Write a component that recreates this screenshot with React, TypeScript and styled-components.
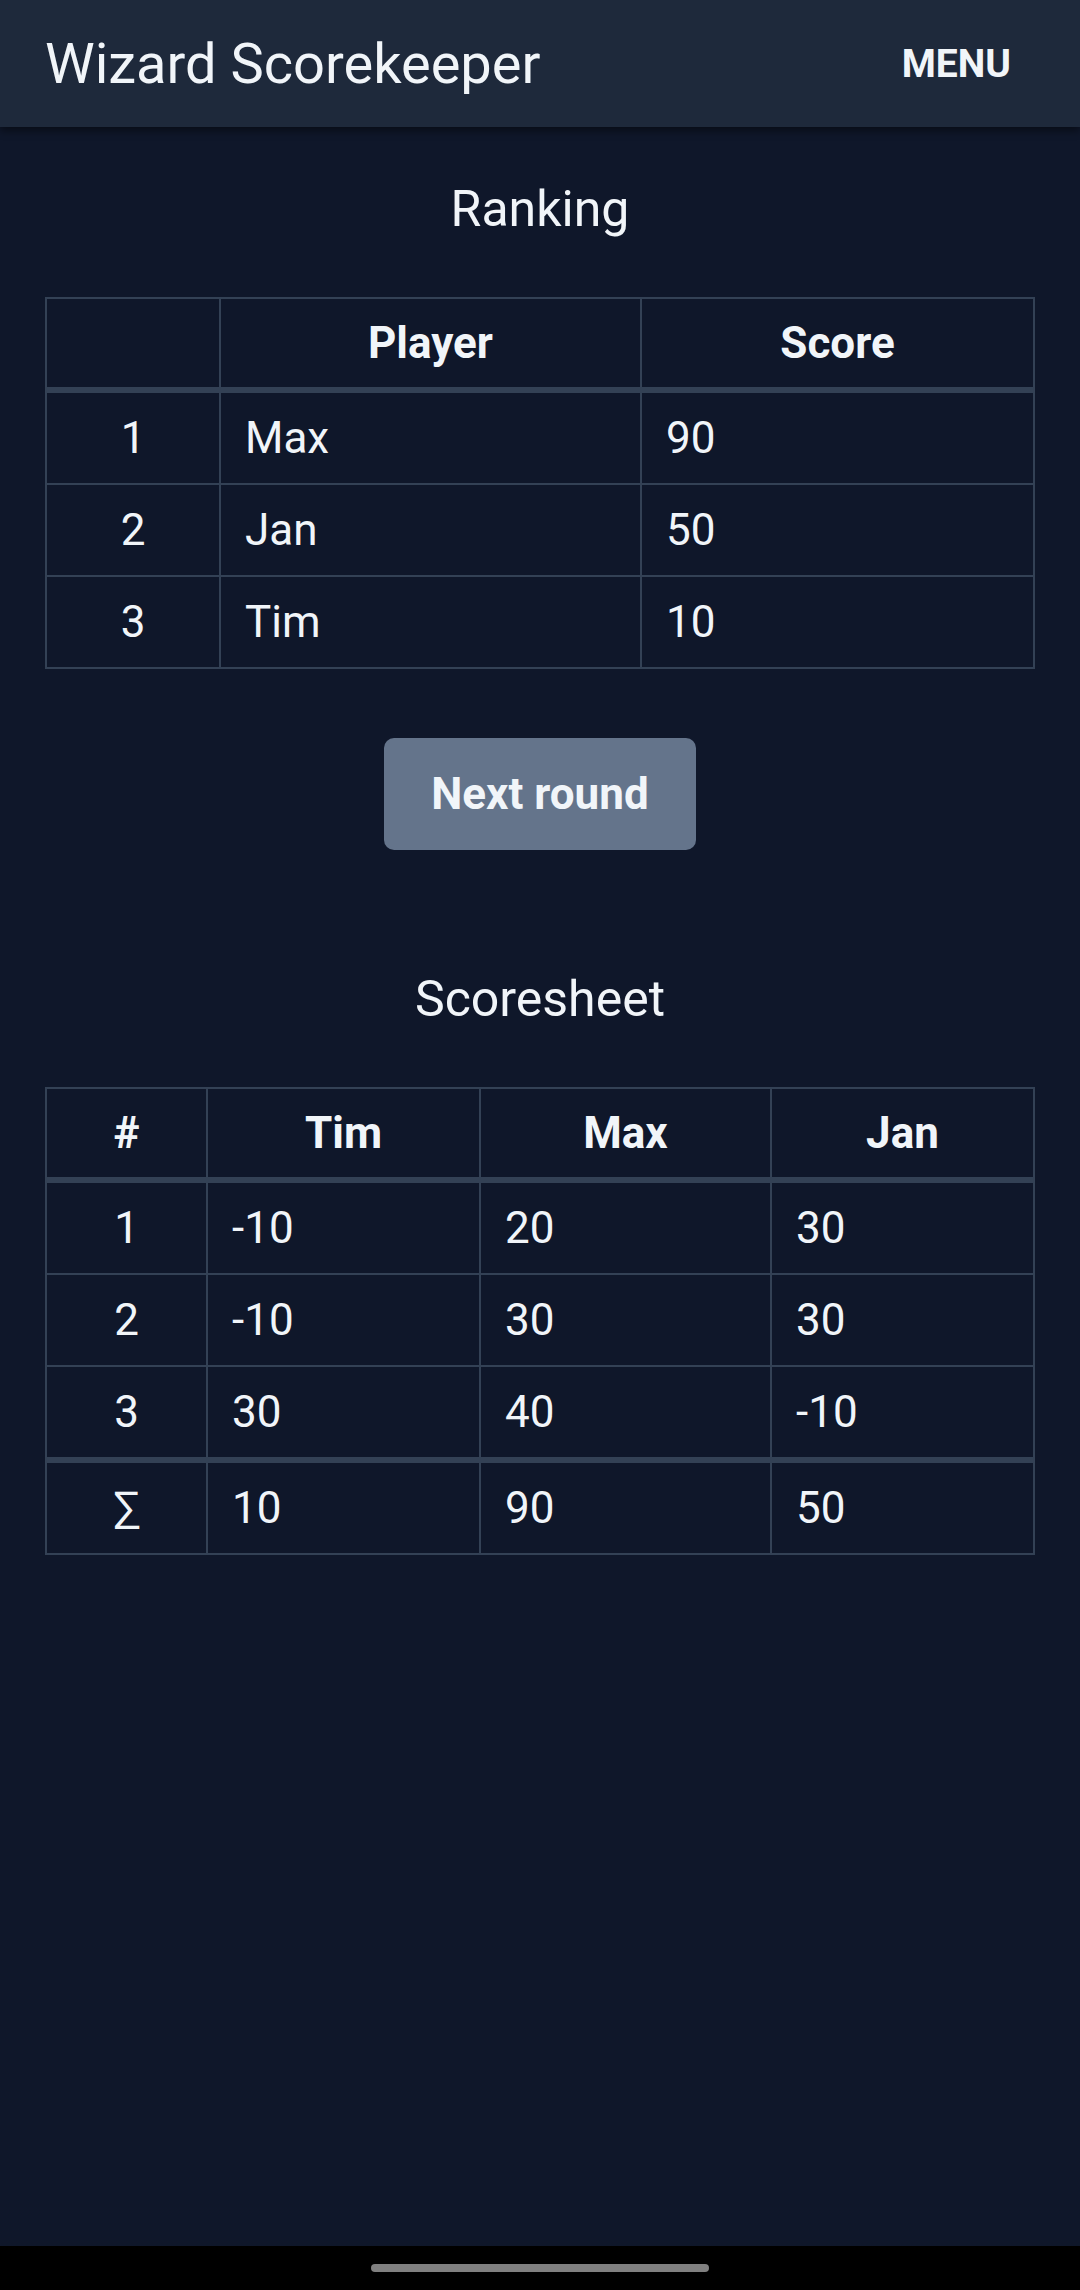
import styled, { createGlobalStyle } from 'styled-components';

const GlobalStyle = createGlobalStyle`
  html, body {
    margin: 0;
    padding: 0;
    background-color: #0f172a;
  }
  body {
    font-family: Roboto, "Liberation Sans", sans-serif;
    color: #f1f5f9;
  }
`;

const ranking = [
  { rank: 1, name: 'Max', score: 90 },
  { rank: 2, name: 'Jan', score: 50 },
  { rank: 3, name: 'Tim', score: 10 },
];

const players = ['Tim', 'Max', 'Jan'];
const rounds = [
  [-10, 20, 30],
  [-10, 30, 30],
  [30, 40, -10],
];
const totals = [10, 90, 50];

function App() {
  return (
    <Page>
      <GlobalStyle />
      <AppBar>
        <Title>Wizard Scorekeeper</Title>
        <MenuButton>Menu</MenuButton>
      </AppBar>
      <Main>
        <Heading>Ranking</Heading>
        <Table>
          <colgroup>
            <col style={{ width: 174 }} />
            <col style={{ width: 421 }} />
            <col />
          </colgroup>
          <thead>
            <tr>
              <Th></Th>
              <Th>Player</Th>
              <Th>Score</Th>
            </tr>
          </thead>
          <tbody>
            {ranking.map((r) => (
              <tr key={r.rank}>
                <Td $center>{r.rank}</Td>
                <Td>{r.name}</Td>
                <Td>{r.score}</Td>
              </tr>
            ))}
          </tbody>
        </Table>

        <ButtonRow>
          <PrimaryButton>Next round</PrimaryButton>
        </ButtonRow>

        <Heading $spaced>Scoresheet</Heading>
        <Table>
          <colgroup>
            <col style={{ width: 161 }} />
            <col style={{ width: 273 }} />
            <col style={{ width: 291 }} />
            <col />
          </colgroup>
          <thead>
            <tr>
              <Th>#</Th>
              {players.map((p) => (
                <Th key={p}>{p}</Th>
              ))}
            </tr>
          </thead>
          <tbody>
            {rounds.map((row, i) => (
              <tr key={i}>
                <Td $center>{i + 1}</Td>
                {row.map((v, j) => (
                  <Td key={j}>{v}</Td>
                ))}
              </tr>
            ))}
          </tbody>
          <tfoot>
            <tr>
              <SumTd $center>∑</SumTd>
              {totals.map((t, j) => (
                <SumTd key={j}>{t}</SumTd>
              ))}
            </tr>
          </tfoot>
        </Table>
      </Main>
      <NavBar>
        <HomePill />
      </NavBar>
    </Page>
  );
}

export default App;

const Page = styled.div`
  min-height: 100vh;
  display: flex;
  flex-direction: column;
  background-color: #0f172a;
`;

const AppBar = styled.header`
  height: 127px;
  display: flex;
  align-items: center;
  justify-content: space-between;
  padding: 0 45px;
  background-color: #1e293b;
  box-shadow: 0 4px 8px rgba(0, 0, 0, 0.45);
  position: relative;
  z-index: 1;
`;

const Title = styled.h1`
  margin: 0;
  font-size: 56px;
  font-weight: 400;
  color: #f1f5f9;
`;

const MenuButton = styled.button`
  background: none;
  border: none;
  padding: 16px 24px;
  font-family: Roboto, "Liberation Sans", sans-serif;
  font-size: 39px;
  font-weight: 700;
  text-transform: uppercase;
  color: #f1f5f9;
`;

const Main = styled.main`
  flex: 1;
  padding: 52px 45px 0;
`;

const Heading = styled.h2<{ $spaced?: boolean }>`
  margin: ${(p) => (p.$spaced ? '119px' : '0')} 0 58px;
  font-size: 50px;
  line-height: 60px;
  font-weight: 400;
  text-align: center;
  color: #f1f5f9;
`;

const Table = styled.table`
  width: 100%;
  border-collapse: collapse;
  table-layout: fixed;
  border: 2px solid #334155;
  font-size: 44px;
  color: #f1f5f9;
`;

const Th = styled.th`
  height: 88px;
  padding: 0 24px;
  border: 2px solid #334155;
  border-bottom: 6px solid #334155;
  font-weight: 700;
  text-align: center;
`;

const Td = styled.td<{ $center?: boolean }>`
  height: 90px;
  padding: 0 24px;
  border: 2px solid #334155;
  text-align: ${(p) => (p.$center ? 'center' : 'left')};
`;

const SumTd = styled(Td)`
  border-top: 6px solid #334155;
`;

const ButtonRow = styled.div`
  display: flex;
  justify-content: center;
  margin-top: 69px;
`;

const PrimaryButton = styled.button`
  width: 312px;
  height: 112px;
  border: none;
  border-radius: 10px;
  background-color: #64748b;
  font-family: Roboto, "Liberation Sans", sans-serif;
  font-size: 44px;
  font-weight: 700;
  color: #f1f5f9;
`;

const NavBar = styled.div`
  height: 44px;
  display: flex;
  align-items: center;
  justify-content: center;
  background-color: #000;
`;

const HomePill = styled.div`
  width: 338px;
  height: 8px;
  border-radius: 4px;
  background-color: #808080;
`;
